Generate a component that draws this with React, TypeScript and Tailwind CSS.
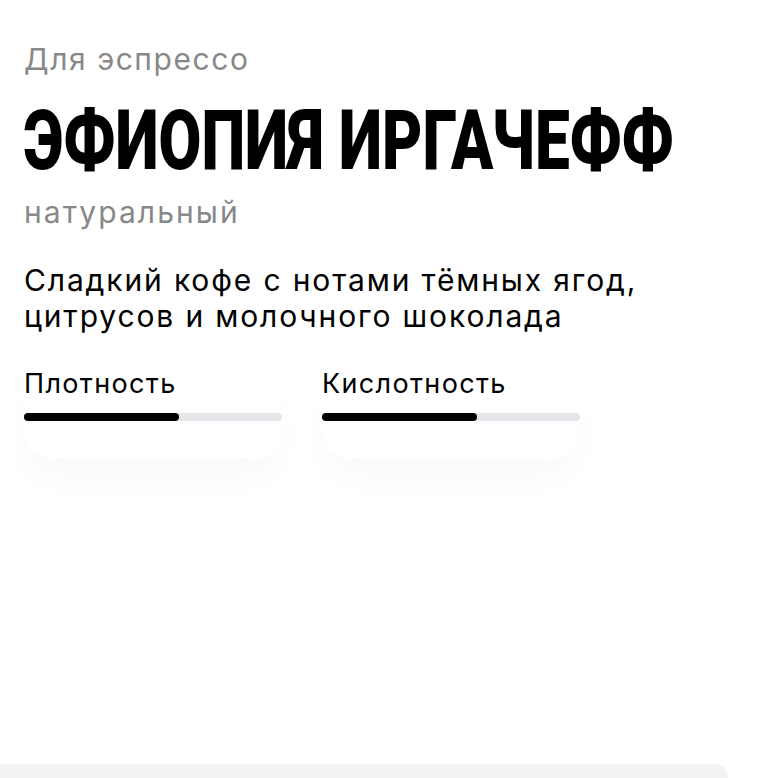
const traits = [
  { label: "Плотность", value: 60 },
  { label: "Кислотность", value: 60 },
];

function TraitBar({ label, value }: { label: string; value: number }) {
  return (
    <div className="w-[258px] rounded-[28px] shadow-[0_22px_36px_-6px_rgba(0,0,0,0.028)] pb-[38px]">
      <div className="text-[27px] leading-[30px] tracking-[0.05em] text-black">{label}</div>
      <div className="mt-[14px] h-[8px] w-full rounded-full bg-[#e6e6ea]">
        <div className="h-full rounded-full bg-black" style={{ width: `${value}%` }} />
      </div>
    </div>
  );
}

export default function App() {
  return (
    <div className="relative h-[778px] w-[784px] overflow-hidden bg-white font-['Inter','Noto_Sans',sans-serif]">
      <div className="px-[24px] pt-[39px]">
        <div className="text-[30px] leading-[40px] tracking-[0.052em] text-[#888888]">Для эспрессо</div>
        <h1 className="mt-[20px] h-[84px] whitespace-nowrap font-['Roboto',sans-serif] text-[84px] font-black leading-[84px] text-black">
          <span className="inline-block origin-left scale-x-[0.739]">ЭФИОПИЯ ИРГАЧЕФФ</span>
        </h1>
        <div className="mt-[9px] text-[30px] leading-[40px] tracking-[0.069em] text-[#888888]">натуральный</div>
        <p className="mt-[30px] text-[30px] leading-[36px] tracking-[0.062em] text-black">
          Сладкий кофе с нотами тёмных ягод,
          <br />
          цитрусов и молочного шоколада
        </p>
        <div className="mt-[35px] flex gap-[40px]">
          {traits.map((t) => (
            <TraitBar key={t.label} label={t.label} value={t.value} />
          ))}
        </div>
      </div>
      <div className="absolute bottom-0 left-0 h-[14px] w-[728px] rounded-tr-[22px] bg-[#f3f3f5]" />
    </div>
  );
}
